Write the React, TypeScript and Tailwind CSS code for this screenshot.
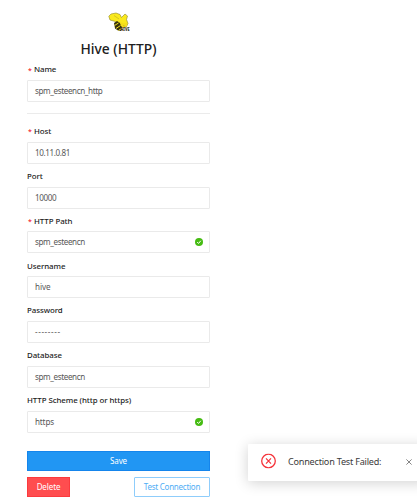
import React from "react";

type FieldProps = {
  label: string;
  value: string;
  required?: boolean;
  valid?: boolean;
  labelClass?: string;
  valueClass?: string;
};

function CheckBadge() {
  return (
    <svg className="h-[8px] w-[8px]" viewBox="0 0 16 16">
      <circle cx="8" cy="8" r="8" fill="#45bb12" />
      <path d="M4.4 8.2l2.6 2.7 4.6-5.4" fill="none" stroke="#fff" strokeWidth="2" />
    </svg>
  );
}

function Field({ label, value, required, valid, labelClass = "pt-[1px]", valueClass = "tracking-[-0.38px]" }: FieldProps) {
  return (
    <div className="flex h-[44.8px] flex-col">
      <div className="flex h-[15px] items-center text-[7.9px] font-medium leading-[15px] tracking-[-0.08px] text-[#1c1c1c]">
        {required && <span className="w-[7px] pl-[1px] pt-[1px] text-[7px] text-[#f5222d]">*</span>}
        <span className={`whitespace-nowrap ${labelClass}`}>{label}</span>
      </div>
      <div className="mt-[3px] flex h-[22px] items-center justify-between rounded-[1px] border border-[#eaeaea] pl-[7px] pr-[6px]">
        <span className={`whitespace-nowrap text-[8.1px] text-[#585858] ${valueClass}`}>{value}</span>
        {valid && <CheckBadge />}
      </div>
    </div>
  );
}

function HiveLogo() {
  return (
    <svg className="h-[21px] w-[24px] overflow-visible" viewBox="0 0 24 21">
      <path d="M1.8 4.2L4 2l5-1 4 1.5 1.5 3L18 2l2.5 2-1 3.5 1.5 4-1.5 3-4 .8-3-3-5-3-4.5-1.3z" fill="#fae91c" stroke="#8d852c" strokeWidth=".6" />
      <path d="M7 11l3-2 3 2 2 4-1 4-3-.5-3-2z" fill="#37310b" />
      <path d="M7.5 13.5l4-2.5M9 16.5l4.5-3M11.5 18.5l3-2" stroke="#f3df25" strokeWidth="1" />
      <path d="M13 10l4 1.5 2.5-1 .8 3-3.3 2.5-3-2z" fill="#f5df19" />
      <path d="M7 3.5l5 3.5M16 13.5l2 .8" stroke="#968b25" strokeWidth=".4" />
      <text x="13.5" y="19.4" fontSize="5.2" fontWeight="800" fill="#2b2614" textLength="9" lengthAdjust="spacingAndGlyphs">HIVE</text>
    </svg>
  );
}

export default function App() {
  return (
    <div className="relative h-[500px] w-[417px] overflow-hidden bg-white font-['Noto_Sans','Open_Sans',sans-serif]">
      <main className="ml-[27px] flex w-[183px] flex-col">
        <header className="flex h-[62px] flex-col items-center pt-[12px]">
          <HiveLogo />
          <h1 className="mt-[6px] whitespace-nowrap text-[13.8px] font-medium leading-[20px] text-[#202020]">Hive (HTTP)</h1>
        </header>
        <Field label="Name" value="spm_esteencn_http" required labelClass="" />
        <div className="mt-[6px] h-[11px] border-t border-[#ebebeb]" />
        <Field label="Host" value="10.11.0.81" required />
        <Field label="Port" value="10000" />
        <Field label="HTTP Path" value="spm_esteencn" required valid />
        <Field label="Username" value="hive" valueClass="tracking-[-0.1px]" />
        <Field label="Password" value="--------" valueClass="pt-[1px] tracking-[0.6px]" />
        <Field label="Database" value="spm_esteencn" />
        <Field label="HTTP Scheme (http or https)" value="https" valid valueClass="tracking-[-0.15px]" />
        <button className="mt-[14px] h-[20px] border border-[#1585ec] bg-[#2196f3] text-[8px] leading-[18px] tracking-[-0.1px] text-white">Save</button>
        <div className="mt-[6px] flex justify-between text-[8px] leading-[18px] tracking-[-0.1px]">
          <button className="h-[20px] w-[43px] border border-[#fb3a3e] bg-[#ff4d4f] text-white">Delete</button>
          <button className="h-[20px] w-[76px] whitespace-nowrap rounded-[1px] border border-[#8fcdfb] tracking-[-0.25px] text-[#50aef5]">Test Connection</button>
        </div>
      </main>
      <aside className="absolute left-[248px] top-[444px] flex h-[37px] w-[180px] items-center rounded-[1px] bg-white pl-[13px] shadow-[0_2px_14px_rgba(0,0,0,0.18)]">
        <svg className="h-[15px] w-[15px] -translate-y-[1.5px]" viewBox="0 0 15 15" fill="none" stroke="#f5333a">
          <circle cx="7.5" cy="7.5" r="6.8" strokeWidth="1.3" />
          <path d="M5 4.8l5 5.4M10 4.8l-5 5.4" strokeWidth="1.2" />
        </svg>
        <span className="ml-[12px] w-[118px] -translate-y-[1px] whitespace-nowrap text-[9.1px] tracking-[-0.22px] text-[#3a3a3a]">Connection Test Failed:</span>
        <svg className="h-[6px] w-[6px] shrink-0 -translate-y-[1px]" viewBox="0 0 6 6" stroke="#666" strokeWidth=".8">
          <path d="M.4.4l5.2 5.2M5.6.4L.4 5.6" />
        </svg>
      </aside>
    </div>
  );
}
